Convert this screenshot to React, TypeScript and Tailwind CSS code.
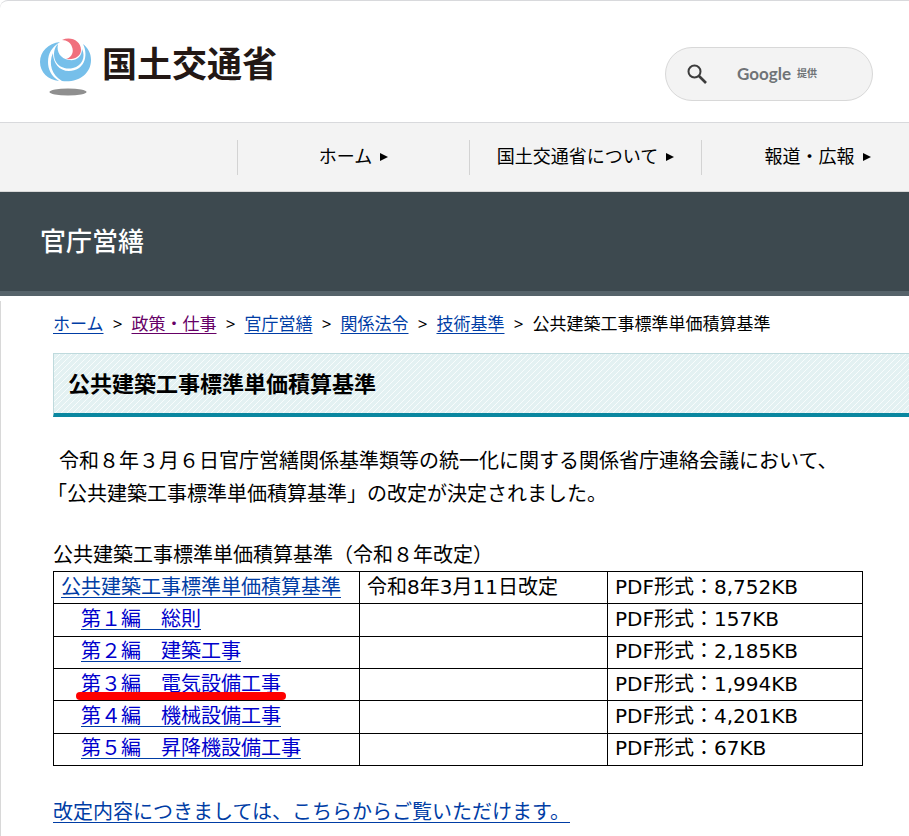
import { clsx } from 'clsx';

const navItems = ['ホーム', '国土交通省について', '報道・広報'];

const crumbs = [
  { label: 'ホーム' },
  { label: '政策・仕事', visited: true },
  { label: '官庁営繕' },
  { label: '関係法令' },
  { label: '技術基準' },
];

const chapters = [
  { title: '第１編　総則', size: '157KB' },
  { title: '第２編　建築工事', size: '2,185KB' },
  { title: '第３編　電気設備工事', size: '1,994KB', marked: true },
  { title: '第４編　機械設備工事', size: '4,201KB' },
  { title: '第５編　昇降機設備工事', size: '67KB' },
];

function Logo() {
  return (
    <svg width="52" height="58" viewBox="0 0 52 58" aria-hidden="true">
      <path d="M20 4 C8 5 0 14 0 24 C0 34 8 42 19 43 C11 38 8 31 8 24 C8 15 12 9 20 4Z" fill="#76bfea" />
      <path d="M13 15 C8 26 12 37 22 43 C38 45 51 36 51 22 C51 15 48 10 43 6 C49 18 44 33 29 33 C19 33 13 25 13 15Z" fill="#76bfea" />
      <path d="M18 6 C14 10 13 16 15 22 C18 29 26 32 33 30 C42 28 46 19 42 11 C42 19 36 23 29 22 C21 21 16 14 18 6Z" fill="#76bfea" />
      <path d="M22 2 C31 -2 41 3 41 12 C41 18 35 22 26 21 C32 19 34 14 32 9 C31 5 27 2 22 2Z" fill="#f0707d" />
      <ellipse cx="28" cy="54" rx="18.5" ry="3.5" fill="#8f8f8f" />
    </svg>
  );
}

function Arrow() {
  return (
    <svg width="8" height="8" viewBox="0 0 8 8" aria-hidden="true">
      <path d="M0 0 L8 4 L0 8Z" fill="#000" />
    </svg>
  );
}

function Header() {
  return (
    <header className="flex h-[123px] items-start justify-between rounded-tl-lg border-y border-[#d8d9dc] bg-white pr-9 pl-10">
      <a href="#" className="mt-[37px] flex items-start gap-2.5 text-[#231815]">
        <Logo />
        <span className="text-[35px] leading-[54px] font-bold">国土交通省</span>
      </a>
      <form className="relative mt-[46px] flex h-[54px] w-52 items-center rounded-full border border-[#d8d8d8] bg-[#f3f3f3] pl-5">
        <button type="button" aria-label="検索">
          <svg width="22" height="22" viewBox="0 0 22 22" fill="none" stroke="#3c3c3c" strokeWidth="2" aria-hidden="true">
            <circle cx="8.5" cy="8.5" r="6" />
            <path d="M13 13 L20 20" strokeWidth="2.6" />
          </svg>
        </button>
        <input type="text" aria-label="サイト内検索" className="h-full min-w-0 flex-1 rounded-full bg-transparent outline-none" />
        <span className="pointer-events-none absolute left-[71px] flex items-center gap-1.5 font-bold text-[#6f7377]">
          <span className="font-['Lato'] text-[17px] leading-6">Google</span>
          <span className="text-[10px] leading-6">提供</span>
        </span>
      </form>
    </header>
  );
}

function GlobalNav() {
  return (
    <nav className="flex h-[69px] items-center overflow-hidden border-b border-[#d8d8d8] bg-[#f3f3f3] pl-[237px]">
      {navItems.map((item) => (
        <a
          key={item}
          href="#"
          className="flex h-[35px] w-58 shrink-0 items-center justify-center gap-2 border-l border-[#d3d3d3] text-lg leading-6"
        >
          {item}
          <Arrow />
        </a>
      ))}
    </nav>
  );
}

function Breadcrumb() {
  return (
    <nav aria-label="パンくず" className="flex flex-wrap text-[17px] leading-6">
      {crumbs.map((crumb) => (
        <span key={crumb.label} className="flex">
          <a
            href="#"
            className={clsx('underline decoration-1 underline-offset-3', crumb.visited ? 'text-[#660066]' : 'text-[#003da5]')}
          >
            {crumb.label}
          </a>
          <span className="w-7 text-center font-['Noto_Sans']">&gt;</span>
        </span>
      ))}
      <span>公共建築工事標準単価積算基準</span>
    </nav>
  );
}

function StandardsTable() {
  return (
    <table className="h-[195px] w-[810px] table-fixed border-collapse leading-6">
      <caption className="h-8 text-left leading-8 whitespace-nowrap">公共建築工事標準単価積算基準（令和８年改定）</caption>
      <colgroup>
        <col className="w-[306px]" />
        <col className="w-[248px]" />
        <col />
      </colgroup>
      <tbody>
        <tr>
          <td className="border border-black px-[7px] pb-0.5">
            <a href="#" className="text-[#003da5] underline decoration-1 underline-offset-3">公共建築工事標準単価積算基準</a>
          </td>
          <td className="border border-black px-[7px] pb-0.5">令和8年3月11日改定</td>
          <td className="border border-black px-[7px] pb-0.5">PDF形式：8,752KB</td>
        </tr>
        {chapters.map((chapter) => (
          <tr key={chapter.title}>
            <td className="border border-black pr-[7px] pb-0.5 pl-[27px]">
              <a
                href="#"
                className="relative inline-block text-[#0000cc] underline decoration-[#003da5] decoration-1 underline-offset-3"
              >
                {chapter.title}
                {chapter.marked && <span className="absolute -inset-x-[5px] -bottom-1 h-2 rounded-full bg-[#ff0000]" />}
              </a>
            </td>
            <td className="border border-black px-[7px] pb-0.5"></td>
            <td className="border border-black px-[7px] pb-0.5">PDF形式：{chapter.size}</td>
          </tr>
        ))}
      </tbody>
    </table>
  );
}

export default function App() {
  return (
    <div className="min-h-screen overflow-hidden bg-white font-['DejaVu_Sans','Noto_Sans_CJK_JP',sans-serif] text-black">
      <Header />
      <GlobalNav />

      <div className="flex h-[104px] items-center border-b-5 border-[#56636a] bg-[#3d494f] pl-10">
        <p className="text-[26px] leading-10 font-medium text-white">官庁営繕</p>
      </div>

      {/* Main content */}
      <main className="mt-[5px] border-l border-[#d8d8d8] pt-[11px] pb-3 pl-[52px]">
        <Breadcrumb />

        <h1 className="mt-[17px] border-t border-b-4 border-l border-t-[#bfdadd] border-b-[#0a87a0] border-l-[#bfdadd] bg-[#e3f1f2] bg-[linear-gradient(135deg,transparent_42%,#f8fcfc_42%,#f8fcfc_58%,transparent_58%)] bg-size-[6px_6px] px-3.5 pt-3.5 pb-3 text-[22px] leading-[33px] font-bold">
          公共建築工事標準単価積算基準
        </h1>

        <div className="mt-7 text-xl">
          <p className="leading-[33px]">
            <span className="block indent-1.5 whitespace-nowrap">
              令和８年３月６日官庁営繕関係基準類等の統一化に関する関係省庁連絡会議において、
            </span>
            <span className="block -indent-1.5 whitespace-nowrap">「公共建築工事標準単価積算基準」の改定が決定されました。</span>
          </p>
          <div className="mt-7">
            <StandardsTable />
          </div>
          <p className="mt-8 leading-7">
            <a href="#" className="text-[#003da5] underline decoration-1 underline-offset-3">
              改定内容につきましては、こちらからご覧いただけます。
            </a>
          </p>
        </div>
      </main>
    </div>
  );
}
